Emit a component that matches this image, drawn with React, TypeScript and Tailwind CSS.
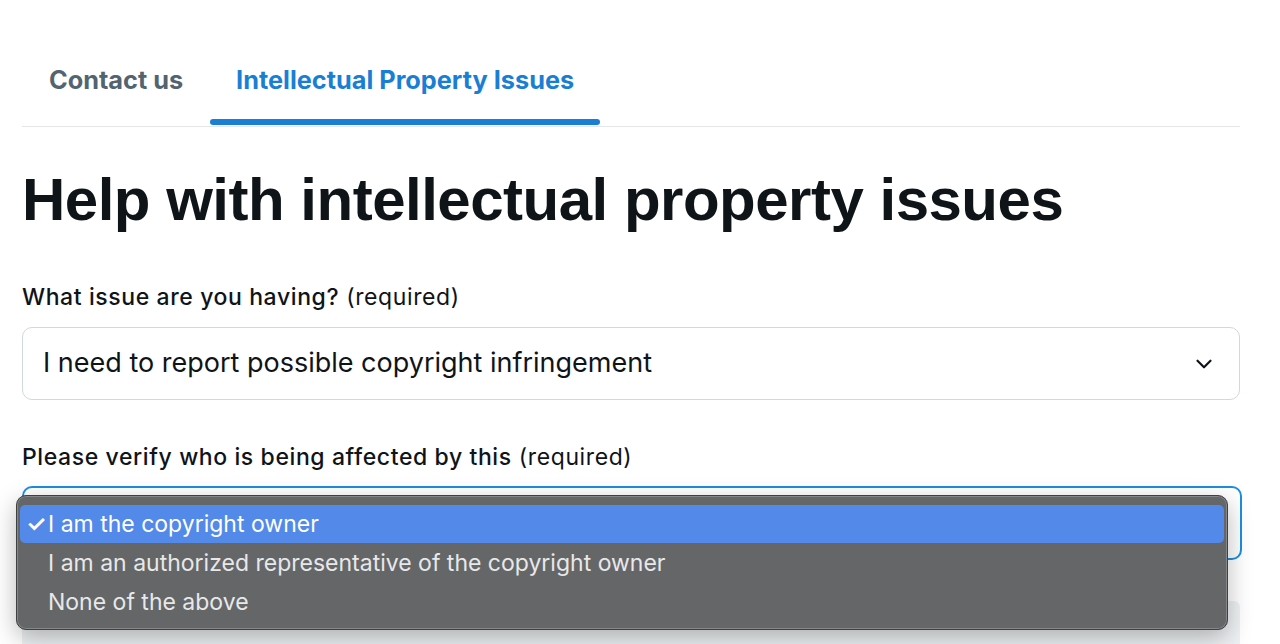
import { ChevronDown } from "lucide-react";

const options = [
  "I am the copyright owner",
  "I am an authorized representative of the copyright owner",
  "None of the above",
];

export default function App() {
  return (
    <div className="w-[1280px] h-[644px] overflow-hidden bg-white px-[22px] pt-[36px] font-['Inter',sans-serif] text-[#0f1419]">
      {/* Tabs */}
      <div className="flex w-[1218px] border-b border-[#e4e6e8]">
        <div className="px-[27px] pb-[8px]">
          <div className="h-[82px] flex items-start pt-[30px] text-[25.3px] leading-[28px] font-bold text-[#536471]">
            Contact us
          </div>
        </div>
        <div className="relative px-[26px]">
          <div className="h-[90px] flex items-start pt-[30px] text-[25.3px] leading-[28px] font-bold text-[#1a7fd4]">
            Intellectual Property Issues
          </div>
          <div className="absolute left-0 right-0 bottom-[1px] h-[6px] rounded-full bg-[#1a7fd4]" />
        </div>
      </div>

      <h1 className="mt-[38px] font-['Liberation_Sans',sans-serif] font-bold text-[60px] leading-[70px] tracking-[-0.5px] text-[#0f1419]">
        Help with intellectual property issues
      </h1>

      <div className="mt-[48px] text-[23px] leading-[28px] tracking-[0.6px]">
        <span className="font-medium">What issue are you having?</span>{" "}
        <span className="font-normal">(required)</span>
      </div>

      <div className="mt-[16px] w-[1218px] h-[73px] rounded-[10px] border border-[#cfd9de] flex items-center justify-between pl-[20px] pr-[22px]">
        <span className="text-[27px] text-[#0f1419]">I need to report possible copyright infringement</span>
        <ChevronDown className="w-[26px] h-[26px] text-[#0f1419]" strokeWidth={2} />
      </div>

      <div className="mt-[43px] text-[23px] leading-[28px] tracking-[0.6px]">
        <span className="font-medium">Please verify who is being affected by this</span>{" "}
        <span className="font-normal">(required)</span>
      </div>

      <div className="relative mt-[15px] w-[1220px]">
        <div className="h-[74px] rounded-[10px] border-2 border-[#1d8ee0] bg-white" />
        <div className="mt-[41px] h-[60px] w-[1218px] rounded-[6px] bg-[#eff2f4]" />

        {/* Native select popup */}
        <div className="absolute left-[-6px] top-[9px] w-[1212px] rounded-[10px] border border-[#3e4042] bg-[#646668] px-[3px] pt-[9px] pb-[7px] shadow-[0_8px_24px_rgba(0,0,0,0.28)] ring-1 ring-inset ring-[#85878a]">
          {options.map((opt, i) => (
            <div
              key={opt}
              className={`flex items-center h-[38px] mb-[1px] rounded-[5px] pl-[6px] text-[23px] ${
                i === 0 ? "bg-[#5389e8] text-white" : "text-[#e8e8e8]"
              }`}
            >
              <span className="w-[22px] text-[23px] font-semibold">{i === 0 ? "✓" : ""}</span>
              <span>{opt}</span>
            </div>
          ))}
        </div>
      </div>
    </div>
  );
}
